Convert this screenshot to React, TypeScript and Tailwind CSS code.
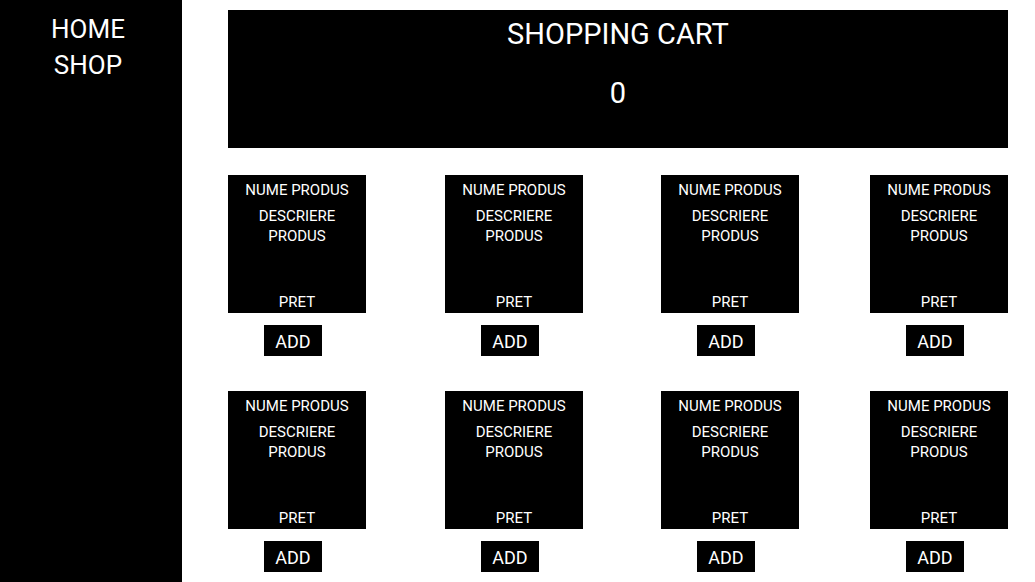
import React from 'react';

const products = Array.from({ length: 8 }, (_, i) => ({
  id: i,
  name: 'NUME PRODUS',
  description: 'DESCRIERE PRODUS',
  price: 'PRET',
}));

const ProductCard: React.FC<{ name: string; description: string; price: string }> = ({
  name,
  description,
  price,
}) => (
  <div className="flex w-[138px] flex-col">
    <div className="flex h-[138px] w-[138px] flex-col items-center justify-between bg-black pt-[5px] pb-[1px] text-center text-[15px] leading-[20px] text-white">
      <div>
        <div className="mb-[6px]">{name}</div>
        <div className="px-6">{description}</div>
      </div>
      <div>{price}</div>
    </div>
    <div className="mt-[12px] pl-[36px]">
      <button className="h-[31px] w-[58px] bg-black pt-[2px] text-[18px] leading-[29px] text-white">ADD</button>
    </div>
  </div>
);

export default function App() {
  return (
    <div className="flex h-[582px] w-full overflow-hidden bg-white font-['Roboto',sans-serif]">
      <nav className="flex w-[182px] shrink-0 flex-col items-center bg-black pt-[11px] pr-[6px] text-[26px] leading-[36px] text-white">
        <a>HOME</a>
        <a>SHOP</a>
      </nav>
      <main className="flex-1 pl-[46px] pt-[10px]">
        <div className="flex h-[138px] w-[780px] flex-col items-center bg-black pt-[7px] text-[29px] leading-[34px] text-white">
          <h1>SHOPPING CART</h1>
          <h2 className="mt-[25px]">0</h2>
        </div>
        <div className="mt-[27px] grid grid-cols-[217px_216px_209px_138px] gap-y-[35px]">
          {products.map((p) => (
            <ProductCard key={p.id} name={p.name} description={p.description} price={p.price} />
          ))}
        </div>
      </main>
    </div>
  );
}
